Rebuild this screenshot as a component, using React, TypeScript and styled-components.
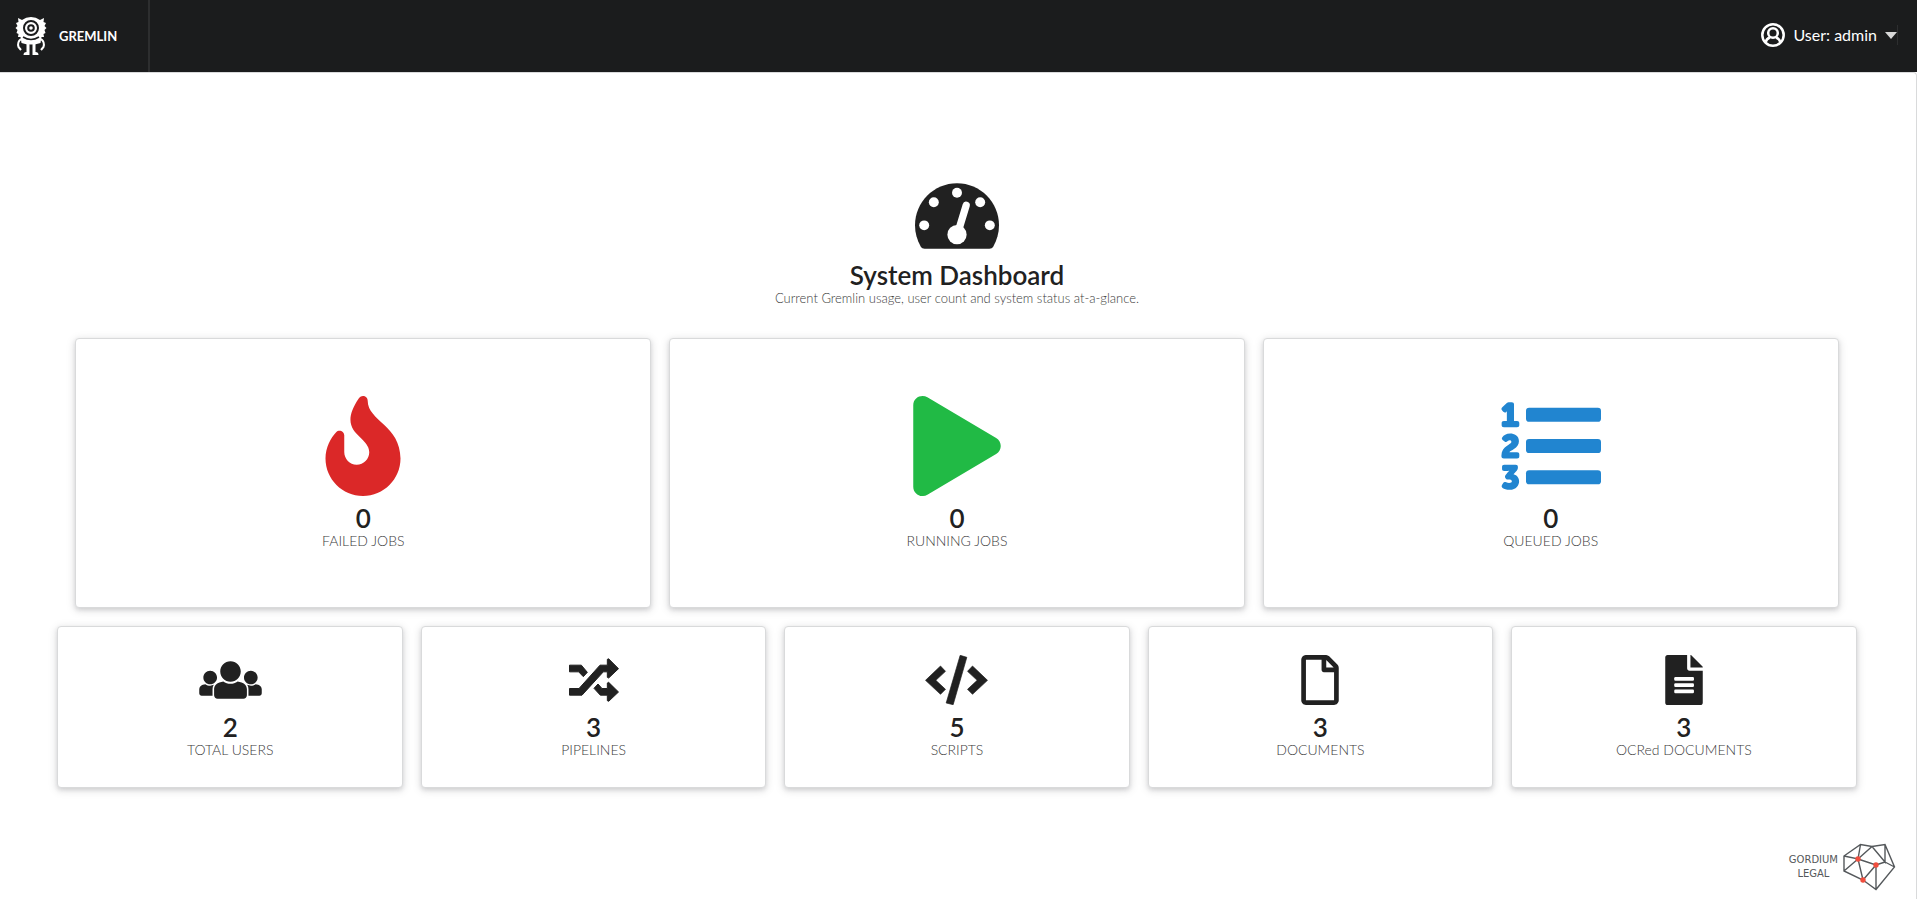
import React from "react";
import styled, { createGlobalStyle } from "styled-components";
import { FaFire, FaPlay, FaRegFile } from "react-icons/fa";

const GlobalStyle = createGlobalStyle`
  *, *::before, *::after { box-sizing: border-box; }
  body {
    margin: 0;
    background: #ffffff;
    color: #212121;
    font-family: Lato, "Helvetica Neue", "Liberation Sans", sans-serif;
    font-size: 14px;
    line-height: 18px;
  }
`;

const Page = styled.div`
  display: flex;
  flex-direction: column;
  min-height: 100vh;
`;

const TopBar = styled.header`
  display: flex;
  justify-content: space-between;
  height: 72px;
  background: #1b1c1d;
  color: #ffffff;
`;

const Brand = styled.a`
  display: flex;
  align-items: center;
  gap: 12px;
  padding: 0 31px 0 15px;
  border-right: 2px solid #2d2e2f;
  color: #ffffff;
  font-size: 13px;
  font-weight: 700;
  text-decoration: none;
`;

const UserArea = styled.div`
  display: flex;
  align-items: center;
  padding: 0 19px 2px 0;
`;

const UserMenu = styled.button`
  display: flex;
  align-items: center;
  gap: 8px;
  height: 20px;
  padding: 0;
  border: 0;
  border-right: 1px solid #2d2e2f;
  background: none;
  color: #ffffff;
  font: inherit;
  font-size: 16px;
`;

const Caret = styled.span`
  width: 0;
  border: 6px solid transparent;
  border-top: 7px solid #d8d8d8;
  border-bottom: 0;
`;

const Main = styled.main`
  display: flex;
  flex: 1;
  flex-direction: column;
  justify-content: space-between;
  border: 1px solid #d9dadb;
  border-left: 0;
  border-bottom: 0;
  border-top-right-radius: 4px;
`;

const Dashboard = styled.div`
  display: flex;
  flex-direction: column;
  gap: 18px;
  padding: 110px calc(3% + 2px) 0 3%;
`;

const Heading = styled.div`
  display: flex;
  flex-direction: column;
  align-items: center;
  margin-bottom: 13px;
`;

const Title = styled.h1`
  margin: 12px 0 0;
  font-size: 26px;
  font-weight: 600;
  line-height: 28px;
`;

const Subtitle = styled.p`
  margin: 0;
  color: #3c3c3c;
  font-size: 13px;
  font-weight: 300;
`;

const CardRow = styled.div<{ $columns: number; $inset: number }>`
  display: grid;
  grid-template-columns: repeat(${(p) => p.$columns}, 1fr);
  gap: 18px;
  margin: 0 ${(p) => p.$inset}px;
`;

const Card = styled.section<{ $pad: number }>`
  display: flex;
  flex-direction: column;
  align-items: center;
  padding: ${(p) => p.$pad}px 0;
  border: 1px solid #d9dadb;
  border-radius: 4px;
  background: #ffffff;
  box-shadow: 0 2px 4px rgba(34, 36, 38, 0.12), 0 2px 10px rgba(34, 36, 38, 0.15);
`;

const CardIcon = styled.span<{ $size: number; $color: string }>`
  display: flex;
  color: ${(p) => p.$color};
  font-size: ${(p) => p.$size}px;
`;

const Count = styled.strong`
  margin-top: 8px;
  font-size: 26px;
  font-weight: 600;
  line-height: 28px;
`;

const Label = styled.span`
  color: #3c3c3c;
  font-size: 14px;
  font-weight: 300;
`;

const Footer = styled.footer`
  display: flex;
  align-items: center;
  justify-content: flex-end;
  gap: 4px;
  padding: 0 20px 8px 0;
`;

const Company = styled.span`
  color: #55585a;
  font-family: "DejaVu Sans", sans-serif;
  font-size: 10px;
  line-height: 14px;
  text-align: center;
`;

const GremlinLogo = () => (
  <svg width="32" height="40" viewBox="0 0 32 40" fill="#ffffff" aria-hidden="true">
    <path d="M3 2 L7 4 Q11 1 16 1 Q21 1 25 4 L29 2 L28.500 6 L31 7 L29.500 10 L31.500 12 L29.500 14 L30.500 17 L28.500 18 L29 21 L26.500 21 L25.500 27 Q16 30 6.500 27 L5.500 21 L3 21 L3.500 18 L1.500 17 L2.500 14 L.5 12 L2.500 10 L1 7 L3.500 6 Z" />
    <circle cx="16" cy="12" r="7" fill="none" stroke="#1b1c1d" strokeWidth="2" />
    <circle cx="16" cy="12" r="2.800" fill="none" stroke="#1b1c1d" strokeWidth="2" />
    <path d="M8 21 Q16 26 24 21" fill="none" stroke="#1b1c1d" strokeWidth="1.500" />
    <path
      d="M6 23 Q2 26 3.500 31 L6 34 M26 23 Q30 26 28.500 31 L26 34"
      fill="none"
      stroke="#ffffff"
      strokeWidth="2"
    />
    <path d="M11.500 27h3v12H8.500q0-3 3-3zM17.500 27h3v9q3 0 3 3h-6z" />
  </svg>
);

const UserCircleIcon = () => (
  <svg
    width="24"
    height="24"
    viewBox="0 0 24 24"
    fill="none"
    stroke="currentColor"
    strokeWidth="2.500"
    aria-hidden="true"
  >
    <circle cx="12" cy="12" r="10.700" />
    <circle cx="12" cy="10" r="4.800" />
    <path d="M4.500 19.500 Q5.500 15.500 9 14.500 M19.500 19.500 Q18.500 15.500 15 14.500" />
  </svg>
);

const GordiumLogo = () => (
  <svg width="54" height="48" viewBox="0 0 54 48" fill="none" aria-hidden="true">
    <path
      d="M2 13 18.500 1.500 30 3.500 43 1.500 52.500 24 34 46.500 21 37 2 28Z M2 13 16 16 18.500 1.500 M2 28 16 16 30 3.500 43 19 43 1.500 M43 19 52.500 24 M16 16 34 22 43 19 M16 16 21 37 34 22V46.500"
      stroke="#54585b"
      strokeWidth="1.400"
    />
    <g fill="#f04e3e">
      <circle cx="16" cy="16" r="2.700" />
      <circle cx="34" cy="22" r="2.700" />
      <circle cx="21" cy="37" r="2.700" />
    </g>
  </svg>
);

const GaugeIcon = () => (
  <svg width="84" height="66" viewBox="0 32 576 448" aria-hidden="true">
    <path
      fill="#212121"
      d="M288 32C129 32 0 161 0 320c0 53 14 102 39 145 6 10 16 15 27 15h444c11 0 21-5 27-15 25-43 39-92 39-145C576 161 447 32 288 32z"
    />
    <g fill="#ffffff">
      <circle cx="288" cy="96" r="34" />
      <circle cx="129" cy="162" r="34" />
      <circle cx="447" cy="162" r="34" />
      <circle cx="63" cy="320" r="34" />
      <circle cx="513" cy="320" r="34" />
      <circle cx="288" cy="384" r="66" />
    </g>
    <path d="M290 384 351 183" stroke="#ffffff" strokeWidth="50" strokeLinecap="round" />
  </svg>
);

const NumberedListIcon = () => (
  <svg width="1em" height="1em" viewBox="0 0 512 512" fill="currentColor" aria-hidden="true">
    <path d="M3.263 139.527c0-7.477 3.917-11.572 11.573-11.572h15.131V88.078c0-5.163.534-10.503.534-10.503h-.356s-1.779 2.670-2.848 3.738c-4.451 4.273-10.504 4.451-15.666-1.068l-5.518-6.231c-5.342-5.341-4.984-11.216.534-16.379l21.720-19.938C32.815 33.602 36.732 32 42.785 32H54.890c7.656 0 11.749 3.916 11.749 11.572v84.384h15.488c7.655 0 11.572 4.094 11.572 11.572v8.901c0 7.477-3.917 11.572-11.572 11.572H14.836c-7.656 0-11.573-4.095-11.573-11.572v-8.902zM2.211 304.591c0-47.278 50.955-56.383 50.955-69.165 0-7.180-5.954-8.755-9.280-8.755-3.153 0-6.479 1.051-9.455 3.852-5.079 4.903-10.507 7.004-16.111 2.451l-8.579-6.829c-5.779-4.553-7.180-9.805-2.803-15.409C13.592 201.981 26.025 192 47.387 192c19.437 0 44.476 10.506 44.476 39.573 0 38.347-46.753 46.402-48.679 56.909h39.049c7.529 0 11.557 4.027 11.557 11.382v8.755c0 7.354-4.028 11.382-11.557 11.382h-67.940c-7.005 0-12.083-4.028-12.083-11.382v-4.028zM5.654 454.610l5.603-9.280c3.853-6.654 9.105-7.004 15.584-3.152 4.903 2.101 9.630 3.152 14.359 3.152 10.155 0 14.358-3.502 14.358-8.230 0-6.654-5.604-9.106-15.934-9.106h-4.728c-5.954 0-9.280-2.101-12.258-7.880l-1.050-1.926c-2.451-4.728-1.226-9.806 2.801-14.884l5.604-7.004c6.829-8.405 12.257-13.483 12.257-13.483v-.350s-4.203 1.051-12.608 1.051H16.685c-7.530 0-11.383-4.028-11.383-11.382v-8.755c0-7.530 3.853-11.382 11.383-11.382h58.484c7.529 0 11.382 4.027 11.382 11.382v3.327c0 5.778-1.401 9.806-5.079 14.183l-17.509 20.137c19.611 5.078 28.716 20.487 28.716 34.845 0 21.363-14.358 44.126-48.503 44.126-16.636 0-28.192-4.728-35.896-9.455-5.779-4.202-6.304-9.805-2.626-15.934z" />
    <rect x="128" y="60" width="384" height="72" rx="16" />
    <rect x="128" y="220" width="384" height="72" rx="16" />
    <rect x="128" y="380" width="384" height="72" rx="16" />
  </svg>
);

const UsersIcon = () => (
  <svg width="63" height="50" viewBox="0 0 640 512" fill="currentColor" aria-hidden="true">
    <path d="M320 64c57.990 0 105 47.010 105 105s-47.010 105-105 105-105-47.010-105-105S262.010 64 320 64zm113.463 217.366l-39.982-9.996c-49.168 35.365-108.766 27.473-146.961 0l-39.982 9.996C174.485 289.379 152 318.177 152 351.216V412c0 19.882 16.118 36 36 36h264c19.882 0 36-16.118 36-36v-60.784c0-33.039-22.485-61.837-54.537-69.850zM528 300c38.660 0 70-31.340 70-70s-31.340-70-70-70-70 31.340-70 70 31.340 70 70 70zm-416 0c38.660 0 70-31.340 70-70s-31.340-70-70-70-70 31.340-70 70 31.340 70 70 70zm24 112v-60.784c0-16.551 4.593-32.204 12.703-45.599-29.988 14.720-63.336 8.708-85.690-7.370l-26.655 6.664C14.990 310.252 0 329.452 0 351.477V392c0 13.255 10.745 24 24 24h112.169a52.417 52.417 0 0 1-.169-4zm467.642-107.090l-26.655-6.664c-27.925 20.086-60.890 19.233-85.786 7.218C499.369 318.893 504 334.601 504 351.216V412c0 1.347-.068 2.678-.169 4H616c13.255 0 24-10.745 24-24v-40.523c0-22.025-14.990-41.225-36.358-46.567z" />
  </svg>
);

const ShuffleIcon = () => (
  <svg
    width="50"
    height="50"
    viewBox="0 0 150 150"
    fill="currentColor"
    stroke="currentColor"
    strokeWidth="3"
    strokeLinejoin="round"
    aria-hidden="true"
  >
    <path d="M1.500 30.500H37L55 52 43 65 29 50.500H1.500Z" />
    <path d="M1.500 100.500H30L93 30.500h22V13l4-1.500 29.500 29.500L119 69l-4-2V50.500h-12L39 120.500H1.500Z" />
    <path d="M87 87l12 13.500h16V84l4-2 29.500 29L119 139l-4-2v-16.500H94L75 100Z" />
  </svg>
);

const CodeIcon = () => (
  <svg
    width="63"
    height="50"
    viewBox="0 0 188 150"
    fill="currentColor"
    stroke="currentColor"
    strokeWidth="2"
    strokeLinejoin="round"
    aria-hidden="true"
  >
    <path d="M1 76 46 33 61 49 32 76 61 103 46 118Z" />
    <path d="M187 76 142 33 127 49 156 76 127 103 142 118Z" />
    <path d="M105 1 125 7 84 149 63 144Z" />
  </svg>
);

const TextFileIcon = () => (
  <svg width="38" height="50" viewBox="0 0 384 512" fill="currentColor" aria-hidden="true">
    <path d="M224 136V0H24C10.700 0 0 10.700 0 24v464c0 13.300 10.700 24 24 24h336c13.300 0 24-10.700 24-24V160H248c-13.200 0-24-10.800-24-24zM384 128H258V0h6l120 120z" />
    <g fill="#ffffff">
      <rect x="92" y="225" width="202" height="38" rx="12" />
      <rect x="92" y="289" width="202" height="38" rx="12" />
      <rect x="92" y="353" width="202" height="38" rx="12" />
    </g>
  </svg>
);

type Stat = { count: number; label: string; icon: React.ReactNode; color?: string };

const jobs: Stat[] = [
  { count: 0, label: "FAILED JOBS", icon: <FaFire />, color: "#db2828" },
  { count: 0, label: "RUNNING JOBS", icon: <FaPlay />, color: "#21ba45" },
  { count: 0, label: "QUEUED JOBS", icon: <NumberedListIcon />, color: "#2185d0" },
];

const totals: Stat[] = [
  { count: 2, label: "TOTAL USERS", icon: <UsersIcon /> },
  { count: 3, label: "PIPELINES", icon: <ShuffleIcon /> },
  { count: 5, label: "SCRIPTS", icon: <CodeIcon /> },
  { count: 3, label: "DOCUMENTS", icon: <FaRegFile /> },
  { count: 3, label: "OCRed DOCUMENTS", icon: <TextFileIcon /> },
];

const StatCards = ({ stats, inset, pad, size }: { stats: Stat[]; inset: number; pad: number; size: number }) => (
  <CardRow $columns={stats.length} $inset={inset}>
    {stats.map((s) => (
      <Card key={s.label} $pad={pad}>
        <CardIcon $size={size} $color={s.color ?? "#212121"}>
          {s.icon}
        </CardIcon>
        <Count>{s.count}</Count>
        <Label>{s.label}</Label>
      </Card>
    ))}
  </CardRow>
);

export default function App() {
  return (
    <Page>
      <GlobalStyle />
      <TopBar>
        <Brand href="#">
          <GremlinLogo />
          GREMLIN
        </Brand>
        <UserArea>
          <UserMenu type="button" aria-haspopup="menu">
            <UserCircleIcon />
            User: admin
            <Caret />
          </UserMenu>
        </UserArea>
      </TopBar>
      <Main>
        <Dashboard>
          <Heading>
            <GaugeIcon />
            <Title>System Dashboard</Title>
            <Subtitle>Current Gremlin usage, user count and system status at-a-glance.</Subtitle>
          </Heading>
          <StatCards stats={jobs} inset={18} pad={57} size={100} />
          <StatCards stats={totals} inset={0} pad={28} size={50} />
        </Dashboard>
        <Footer>
          <Company>
            GORDIUM
            <br />
            LEGAL
          </Company>
          <GordiumLogo />
        </Footer>
      </Main>
    </Page>
  );
}
